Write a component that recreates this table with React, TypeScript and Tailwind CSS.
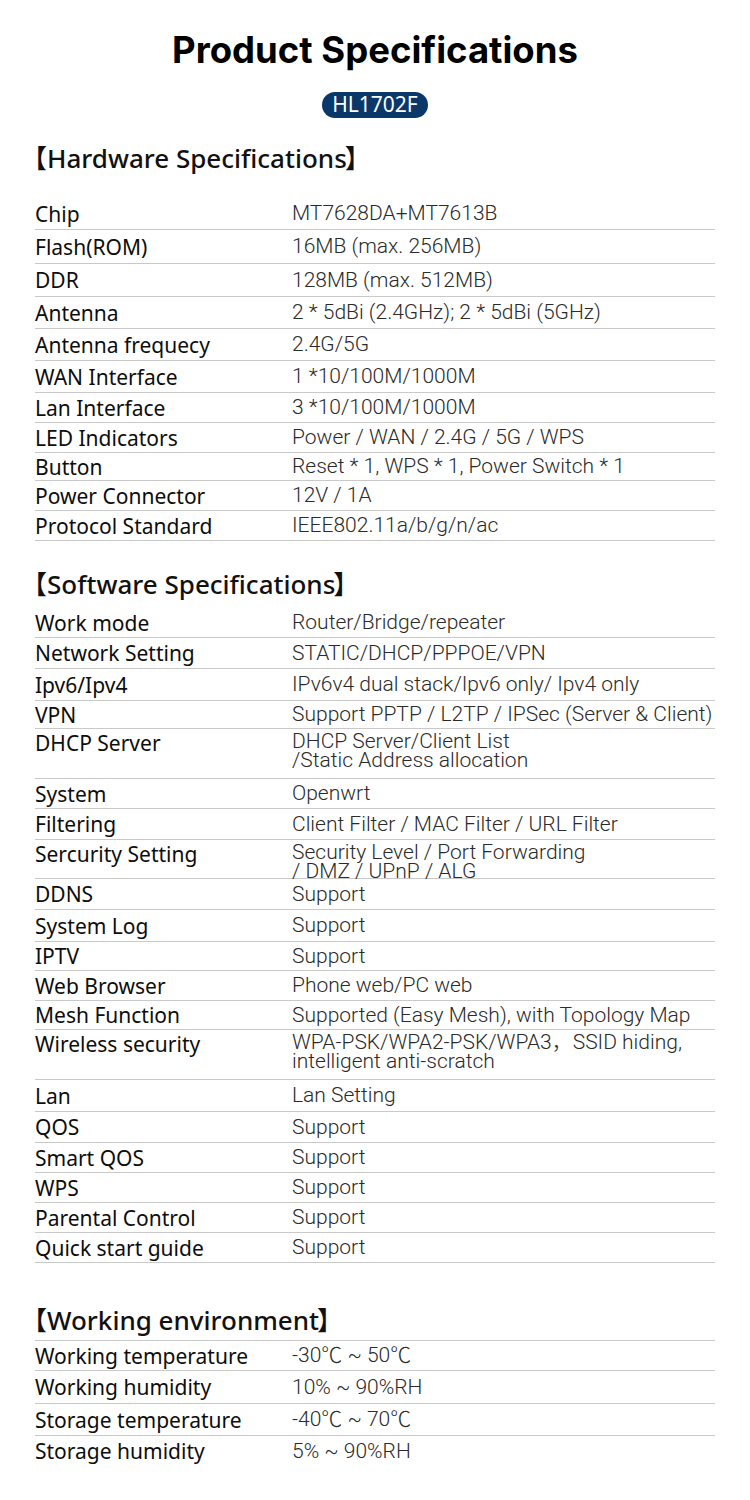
import React from 'react';

type Row = [string, string, number];

// label, value, row height
const hardware: Row[] = [
  ['Chip', 'MT7628DA+MT7613B', 32],
  ['Flash(ROM)', '16MB (max. 256MB)', 34],
  ['DDR', '128MB (max. 512MB)', 33],
  ['Antenna', '2 * 5dBi (2.4GHz); 2 * 5dBi (5GHz)', 32],
  ['Antenna frequecy', '2.4G/5G', 32],
  ['WAN Interface', '1 *10/100M/1000M', 32],
  ['Lan Interface', '3 *10/100M/1000M', 30],
  ['LED Indicators', 'Power / WAN / 2.4G / 5G / WPS', 30],
  ['Button', 'Reset * 1, WPS * 1, Power Switch * 1', 28],
  ['Power Connector', '12V / 1A', 30],
  ['Protocol Standard', 'IEEE802.11a/b/g/n/ac', 30],
];

const software: Row[] = [
  ['Work mode', 'Router/Bridge/repeater', 30],
  ['Network Setting', 'STATIC/DHCP/PPPOE/VPN', 31],
  ['Ipv6/Ipv4', 'IPv6v4 dual stack/Ipv6 only/ Ipv4 only', 32],
  ['VPN', 'Support PPTP / L2TP / IPSec (Server & Client)', 28],
  ['DHCP Server', 'DHCP Server/Client List\n/Static Address allocation', 50],
  ['System', 'Openwrt', 30],
  ['Filtering', 'Client Filter / MAC Filter / URL Filter', 31],
  ['Sercurity Setting', 'Security Level / Port Forwarding\n/ DMZ / UPnP / ALG', 39],
  ['DDNS', 'Support', 31],
  ['System Log', 'Support', 32],
  ['IPTV', 'Support', 29],
  ['Web Browser', 'Phone web/PC web', 30],
  ['Mesh Function', 'Supported (Easy Mesh), with Topology Map', 29],
  ['Wireless security', 'WPA-PSK/WPA2-PSK/WPA3，SSID hiding,\nintelligent anti-scratch', 50],
  ['Lan', 'Lan Setting', 32],
  ['QOS', 'Support', 31],
  ['Smart QOS', 'Support', 30],
  ['WPS', 'Support', 30],
  ['Parental Control', 'Support', 30],
  ['Quick start guide', 'Support', 30],
];

const environment: Row[] = [
  ['Working temperature', '-30℃ ~ 50℃', 30],
  ['Working humidity', '10% ~ 90%RH', 33],
  ['Storage temperature', '-40℃ ~ 70℃', 32],
  ['Storage humidity', '5% ~ 90%RH', 30],
];

const labelFont = "font-['Noto_Sans','Noto_Sans_CJK_SC',sans-serif]";
const valueFont = "font-['Roboto','Noto_Sans_CJK_SC',sans-serif]";

function SpecTable({ rows, lastLine = true }: { rows: Row[]; lastLine?: boolean }) {
  return (
    <div>
      {rows.map(([label, value, h], i) => {
        const multi = value.includes('\n');
        const showLine = i < rows.length - 1 || lastLine;
        return (
          <div
            key={label}
            style={{ height: h }}
            className={`flex ${multi ? 'items-start pt-[3px]' : 'items-center'} ${
              showLine ? 'border-b border-[#c9c9c9]' : ''
            }`}
          >
            <div className={`w-[257px] shrink-0 text-[21px] leading-[22px] text-[#0d0d0d] ${labelFont}`}>
              {label}
            </div>
            <div
              className={`whitespace-pre text-[21px] leading-[19px] font-light text-[#2a2a2a] ${valueFont}`}
            >
              {value}
            </div>
          </div>
        );
      })}
    </div>
  );
}

function Heading({ children }: { children: React.ReactNode }) {
  return (
    <h2 className={`text-[26px] leading-[30px] font-medium text-[#111] ${labelFont}`}>
      <span className="-ml-[14px]">【</span>
      {children}
      <span className="-ml-[2px]">】</span>
    </h2>
  );
}

export default function App() {
  return (
    <div className="w-[750px] h-[1500px] bg-white">
      <div className="flex flex-col items-center pt-[28px]">
        <h1 className="text-[36.5px] leading-[44px] font-bold text-black font-['Inter',sans-serif]">
          Product Specifications
        </h1>
        <div className="mt-[20px] rounded-full bg-[#0b386a] px-[10px] h-[26px] flex items-center text-[21px] text-white font-['Noto_Sans',sans-serif]">
          HL1702F
        </div>
      </div>

      <div className="px-[35px]">
        <div className="mt-[25px]">
          <Heading>Hardware Specifications</Heading>
        </div>
        <div className="mt-[25px]">
          <SpecTable rows={hardware} />
        </div>

        <div className="mt-[28px]">
          <Heading>Software Specifications</Heading>
        </div>
        <div className="mt-[9px]">
          <SpecTable rows={software} />
        </div>

        <div className="mt-[42px] border-b border-[#c9c9c9] pb-[5px]">
          <Heading>Working environment</Heading>
        </div>
        <SpecTable rows={environment} lastLine={false} />
      </div>
    </div>
  );
}
